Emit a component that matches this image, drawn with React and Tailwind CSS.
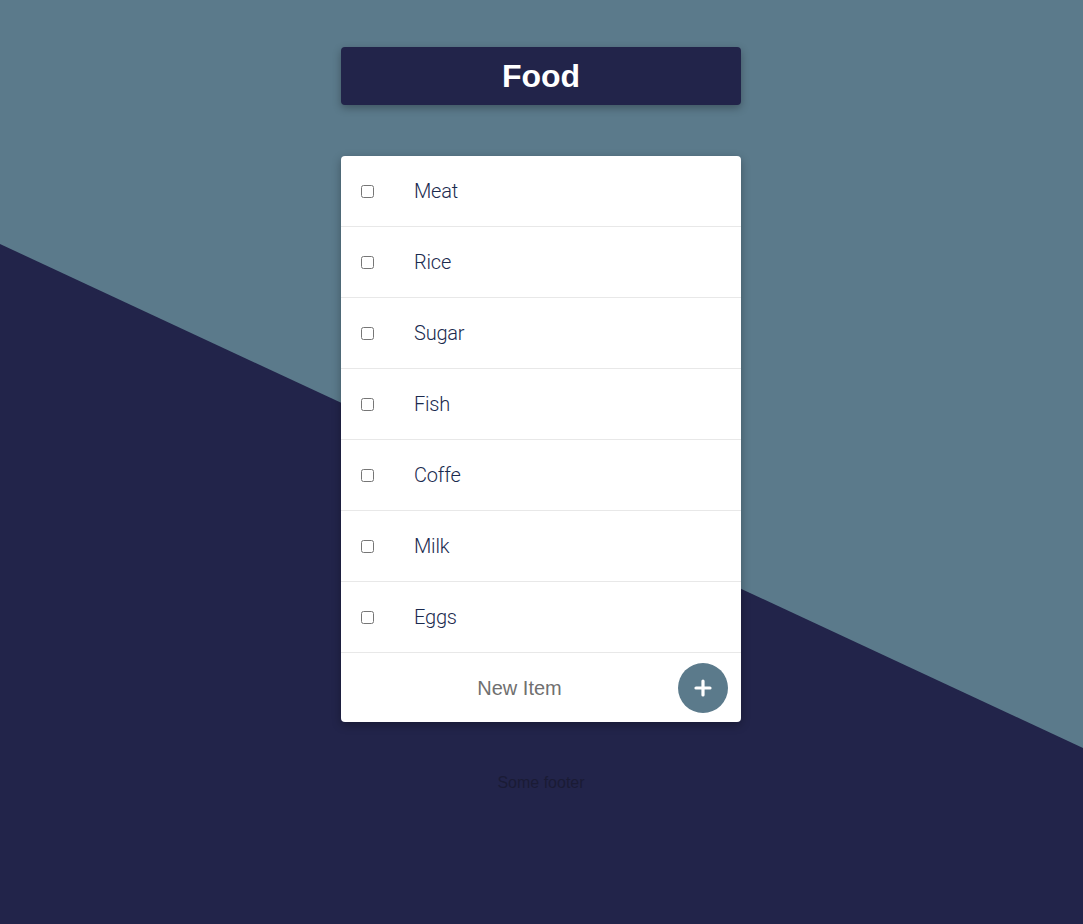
import React, { useState } from "react";
import { Plus } from "lucide-react";

const items = ["Meat", "Rice", "Sugar", "Fish", "Coffe", "Milk", "Eggs"];

const App = () => {
  const [checked, setChecked] = useState({});

  return (
    <div className="relative min-h-screen h-[924px] overflow-hidden bg-[#5b7a8b] font-['Liberation_Sans',Arial,sans-serif]">
      {/* diagonal background */}
      <div className="absolute inset-0 bg-[#22244a] [clip-path:polygon(0_244px,100%_748px,100%_100%,0_100%)]" />

      <div className="relative flex flex-col items-center pt-[47px] pr-px">
        <div className="w-[400px] h-[58px] rounded-[4px] bg-[#22244a] shadow-[0_3px_8px_rgba(0,0,0,0.3)] flex items-center justify-center">
          <h1 className="text-white text-[32px] font-bold leading-none">Food</h1>
        </div>

        <div className="mt-[51px] w-[400px] rounded-[4px] bg-white shadow-[0_3px_10px_rgba(0,0,0,0.3)] overflow-hidden">
          {items.map((item) => (
            <label
              key={item}
              className="flex items-center h-[71px] border-b border-[#e8e8e8] pl-[20px] cursor-pointer"
            >
              <input
                type="checkbox"
                className="w-[13px] h-[13px] m-0"
                checked={!!checked[item]}
                onChange={() => setChecked({ ...checked, [item]: !checked[item] })}
              />
              <span className="ml-[40px] text-[20px] text-[#1a2a4e] font-light font-['Roboto',sans-serif] tracking-[-0.2px]">
                {item}
              </span>
            </label>
          ))}
          <div className="flex items-center h-[69px] pl-[20px] pr-[13px]">
            <span className="flex-1 text-center text-[20px] text-[#707070]">New Item</span>
            <button className="w-[50px] h-[50px] rounded-full bg-[#5b7a8b] flex items-center justify-center text-white">
              <Plus size={24} strokeWidth={3.2} />
            </button>
          </div>
        </div>

        <p className="mt-[49px] text-[16px] text-[#1a1b35]">Some footer</p>
      </div>
    </div>
  );
};

export default App;
